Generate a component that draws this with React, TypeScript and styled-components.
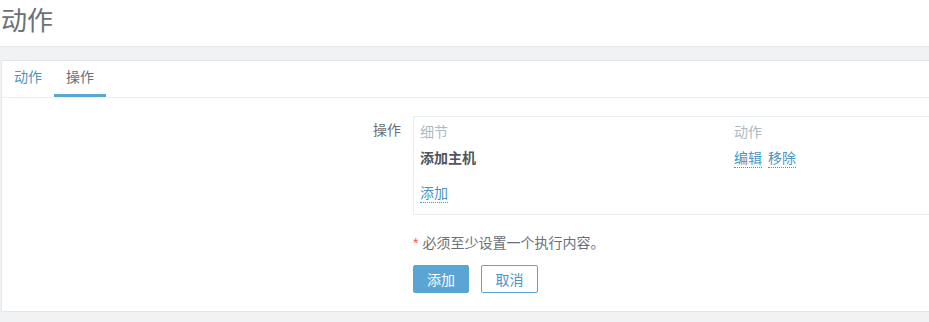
import styled, { createGlobalStyle, css } from "styled-components";

const GlobalStyle = createGlobalStyle`
    body {
        margin: 0;
        background: #f0f2f4;
        font-family: "Liberation Sans", "Noto Sans CJK SC", sans-serif;
        font-size: 14px;
        color: #687076;
        overflow: hidden;
    }
`

const Header = styled.header`
    height: 46px;
    background: #ffffff;
    border-bottom: 1px solid #e4e7ea;

    h1 {
        margin: 0;
        padding: 5px 0 0 1px;
        font-size: 26px;
        font-weight: normal;
        line-height: 32px;
        color: #6b7177;
    }
`

const Main = styled.main`
    padding: 13px 0 0 1px;
`

const Card = styled.div`
    width: 1100px;
    background: #ffffff;
    border: 1px solid #e3e7ea;
    border-right: none;
`

const TabList = styled.ul`
    display: flex;
    margin: 0;
    padding: 0;
    list-style: none;
    height: 36px;
    border-bottom: 1px solid #ebeef0;
`

const Tab = styled.li<{ $active?: boolean }>`
    padding: 0 12px;
    line-height: 33px;
    border-bottom: 3px solid transparent;
    color: #4796c4;
    cursor: pointer;

    ${(p) =>
        p.$active &&
        css`
            color: #687076;
            border-bottom-color: #5aa5d3;
        `}
`

const Form = styled.div`
    padding: 18px 0 18px 0;
`

const FormRow = styled.div`
    display: grid;
    grid-template-columns: 399px 600px;
    column-gap: 12px;
`

const Label = styled.label`
    text-align: right;
    padding-top: 5px;
    line-height: 18px;
`

const OpsBox = styled.div`
    border: 1px solid #ebeef0;
    padding: 6px 6px 11px;
    line-height: 18px;
`

const OpsLine = styled.div<{ $gap?: number }>`
    display: grid;
    grid-template-columns: 314px auto;
    margin-top: ${(p) => p.$gap ?? 0}px;
`

const HeadCell = styled.span`
    color: #acbbc2;
`

const Strong = styled.span`
    font-weight: bold;
    color: #4f565b;
`

const Actions = styled.span`
    display: flex;
    gap: 6px;
`

const LinkText = styled.a`
    color: #4796c4;
    text-decoration: none;
    border-bottom: 1px dotted #4796c4;
    cursor: pointer;
    justify-self: start;
`

const Note = styled.p`
    margin: 19px 0 0;
    line-height: 18px;

    span {
        color: #e45959;
        margin-right: 4px;
    }
`

const Buttons = styled.div`
    display: flex;
    gap: 12px;
    margin-top: 13px;
`

const Button = styled.button<{ $outline?: boolean }>`
    height: 28px;
    min-width: 56px;
    padding: 0 12px;
    border-radius: 2px;
    font-family: inherit;
    font-size: 14px;
    border: 1px solid #5aa5d3;
    background: #5aa5d3;
    color: #ffffff;
    cursor: pointer;

    ${(p) =>
        p.$outline &&
        css`
            background: #ffffff;
            color: #4796c4;
            min-width: 57px;
        `}
`

const App = () => {
    return (
        <>
            <GlobalStyle />
            <Header>
                <h1>动作</h1>
            </Header>
            <Main>
                <Card>
                    <TabList>
                        <Tab>动作</Tab>
                        <Tab $active>操作</Tab>
                    </TabList>
                    <Form>
                        <FormRow>
                            <Label>操作</Label>
                            <div>
                                <OpsBox>
                                    <OpsLine>
                                        <HeadCell>细节</HeadCell>
                                        <HeadCell>动作</HeadCell>
                                    </OpsLine>
                                    <OpsLine $gap={8}>
                                        <Strong>添加主机</Strong>
                                        <Actions>
                                            <LinkText>编辑</LinkText>
                                            <LinkText>移除</LinkText>
                                        </Actions>
                                    </OpsLine>
                                    <OpsLine $gap={16}>
                                        <LinkText>添加</LinkText>
                                    </OpsLine>
                                </OpsBox>
                                <Note>
                                    <span>*</span>必须至少设置一个执行内容。
                                </Note>
                                <Buttons>
                                    <Button>添加</Button>
                                    <Button $outline>取消</Button>
                                </Buttons>
                            </div>
                        </FormRow>
                    </Form>
                </Card>
            </Main>
        </>
    )
}

export default App
